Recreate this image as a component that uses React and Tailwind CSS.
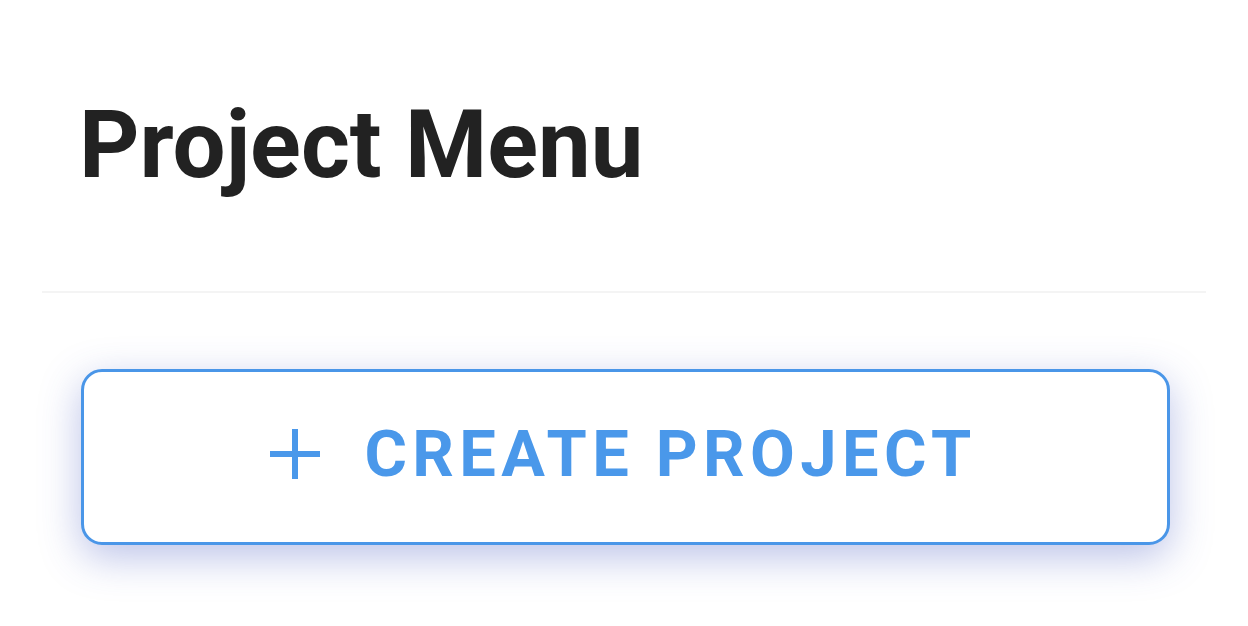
import React from "react";

export default function App() {
  return (
    <div className="w-[1248px] h-[626px] bg-white overflow-hidden" style={{ fontFamily: "Roboto, 'Liberation Sans', sans-serif" }}>
      <h1 className="pt-[98px] pl-[79px] text-[94px] leading-none font-bold text-[#222222]">
        Project Menu
      </h1>
      <div className="mt-[99px] mx-[42px] h-[2px] bg-[#f4f4f4]" />
      <button className="mt-[76px] ml-[81px] w-[1089px] h-[176px] flex items-center justify-center pb-[6px] pr-[4px] rounded-[21px] border-[3px] border-[#4a96e8] bg-white text-[#4a98ea] shadow-[0_12px_40px_rgba(60,80,190,0.35)]">
        <svg width="50" height="50" viewBox="0 0 50 50" className="mr-[44px]">
          <path d="M25 0V50M0 25H50" stroke="currentColor" strokeWidth="6" fill="none" />
        </svg>
        <span className="text-[65px] leading-none font-bold tracking-[5.4px]">CREATE PROJECT</span>
      </button>
    </div>
  );
}
